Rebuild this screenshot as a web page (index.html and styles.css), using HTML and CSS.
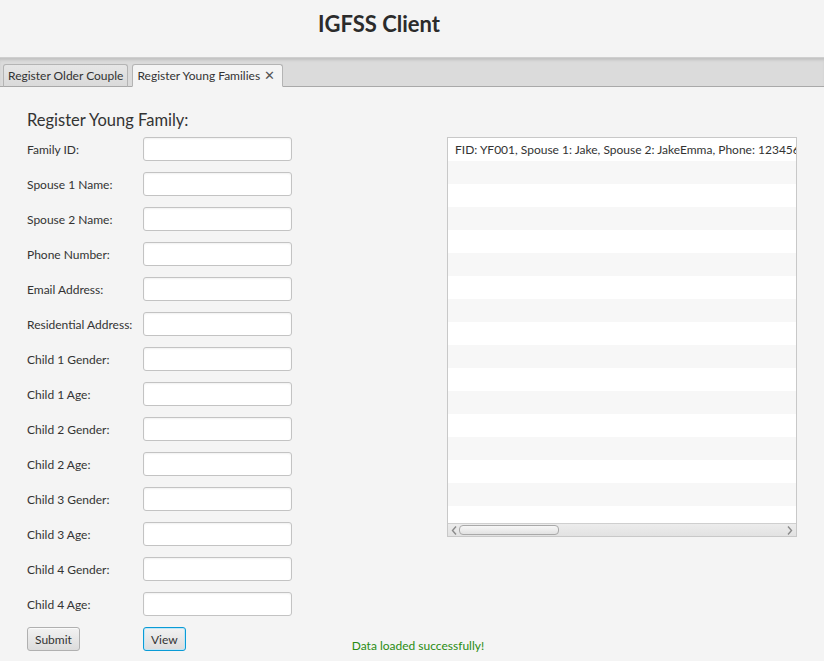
FILE: index.html
```html
<!DOCTYPE html>
<html>
<head>
<meta charset="utf-8">
<link rel="stylesheet" href="styles.css">
</head>
<body>
<header class="app-header"><h1 class="app-title">IGFSS Client</h1></header>
<nav class="tab-bar">
  <div class="tab">Register Older Couple</div>
  <div class="tab tab-active">Register Young Families <span class="tab-close">✕</span></div>
</nav>
<main class="content">
  <h2 class="form-title">Register Young Family:</h2>
  <div class="main-row">
    <div class="form-grid">
      <label class="field-label">Family ID:</label><div class="text-field"></div>
      <label class="field-label">Spouse 1 Name:</label><div class="text-field"></div>
      <label class="field-label">Spouse 2 Name:</label><div class="text-field"></div>
      <label class="field-label">Phone Number:</label><div class="text-field"></div>
      <label class="field-label">Email Address:</label><div class="text-field"></div>
      <label class="field-label">Residential Address:</label><div class="text-field"></div>
      <label class="field-label">Child 1 Gender:</label><div class="text-field"></div>
      <label class="field-label">Child 1 Age:</label><div class="text-field"></div>
      <label class="field-label">Child 2 Gender:</label><div class="text-field"></div>
      <label class="field-label">Child 2 Age:</label><div class="text-field"></div>
      <label class="field-label">Child 3 Gender:</label><div class="text-field"></div>
      <label class="field-label">Child 3 Age:</label><div class="text-field"></div>
      <label class="field-label">Child 4 Gender:</label><div class="text-field"></div>
      <label class="field-label">Child 4 Age:</label><div class="text-field"></div>
    </div>
    <div class="list-view">
      <div class="list-rows">
        <div class="list-row">FID: YF001, Spouse 1: Jake, Spouse 2: JakeEmma, Phone: 1234567890, Email: jake@example.com</div>
        <div class="list-row"></div><div class="list-row"></div><div class="list-row"></div>
        <div class="list-row"></div><div class="list-row"></div><div class="list-row"></div>
        <div class="list-row"></div><div class="list-row"></div><div class="list-row"></div>
        <div class="list-row"></div><div class="list-row"></div><div class="list-row"></div>
        <div class="list-row"></div><div class="list-row"></div><div class="list-row"></div>
        <div class="list-row"></div>
      </div>
      <div class="h-scroll">
        <svg class="arrow" width="7" height="9" viewBox="0 0 7 9"><path d="M5 0.5 L1.5 4.5 L5 8.5" fill="none" stroke="#8a8a8a" stroke-width="1.4"/></svg>
        <div class="thumb"></div>
        <div class="spacer"></div>
        <svg class="arrow" width="7" height="9" viewBox="0 0 7 9"><path d="M2 0.5 L5.5 4.5 L2 8.5" fill="none" stroke="#8a8a8a" stroke-width="1.4"/></svg>
      </div>
    </div>
  </div>
  <div class="button-row">
    <div class="btn-cell"><button class="btn">Submit</button></div>
    <button class="btn btn-focused">View</button>
    <span class="status">Data loaded successfully!</span>
  </div>
</main>
</body>
</html>
```
FILE: styles.css
```css
* { box-sizing: border-box; }
html, body { margin: 0; padding: 0; }
body {
  width: 824px;
  height: 661px;
  overflow: hidden;
  background: #f4f4f4;
  font-family: "Lato", "Open Sans", sans-serif;
  font-size: 12px;
  color: #333;
}
.app-header {
  height: 57px;
  display: flex;
  align-items: center;
  padding-left: 318px;
}
.app-title {
  margin: 0;
  font-size: 22px;
  font-weight: 700;
  color: #2b2b2b;
  padding-bottom: 10px;
}
.tab-bar {
  height: 30px;
  background: #dbdbdb;
  border-top: 1px solid #cfcfcf;
  box-shadow: inset 0 3px 3px -1px rgba(0,0,0,0.12);
  border-bottom: 1px solid #a9a9a9;
  display: flex;
  align-items: flex-end;
  padding-left: 3px;
  gap: 4px;
}
.tab {
  height: 23px;
  margin-bottom: -1px;
  padding: 0 4px;
  display: flex;
  align-items: center;
  border: 1px solid #b4b4b4;
  border-bottom: 1px solid #a9a9a9;
  border-radius: 3px 3px 0 0;
  background: linear-gradient(#e6e6e6, #dadada);
  color: #333;
  font-size: 12px;
}
.tab-active {
  background: #f4f4f4;
  border-bottom-color: #f4f4f4;
  padding-right: 7px;
}
.tab-close {
  margin-left: 4px;
  font-size: 13px;
  font-family: "DejaVu Sans", sans-serif;
  font-weight: 300;
  color: #555;
}
.content {
  padding: 23px 0 0 27px;
}
.form-title {
  margin: 0 0 7px 0;
  font-size: 16.5px;
  font-weight: 400;
  color: #333;
  line-height: 20px;
}
.main-row {
  display: flex;
  align-items: flex-start;
}
.form-grid {
  display: grid;
  grid-template-columns: 116px 149px;
  grid-auto-rows: 24px;
  row-gap: 11px;
  align-items: center;
}
.field-label {
  font-size: 12px;
  color: #333;
}
.text-field {
  height: 24px;
  background: #fff;
  border: 1px solid #c3c3c3;
  border-radius: 3px;
  box-shadow: inset 0 1px 2px rgba(0,0,0,0.06);
}
.list-view {
  margin-left: 155px;
  width: 350px;
  height: 400px;
  border: 1px solid #c8c8c8;
  background: #fff;
  display: flex;
  flex-direction: column;
  overflow: hidden;
}
.list-rows {
  flex: 1;
  overflow: hidden;
}
.list-row {
  height: 23px;
  padding-left: 7px;
  line-height: 23px;
  white-space: nowrap;
  overflow: hidden;
  font-size: 12px;
  color: #333;
}
.list-row:nth-child(even) { background: #f7f7f7; }
.list-row:nth-child(odd) { background: #ffffff; }
.h-scroll {
  height: 13px;
  flex: none;
  border-top: 1px solid #cfcfcf;
  background: linear-gradient(#ececec, #e2e2e2);
  display: flex;
  align-items: center;
  padding: 0 3px;
}
.arrow { flex: none; }
.thumb {
  margin-left: 1px;
  width: 100px;
  height: 10px;
  border: 1px solid #a9a9a9;
  border-radius: 4px;
  background: linear-gradient(#f7f7f7, #e2e2e2);
}
.spacer { flex: 1; }
.button-row {
  display: flex;
  align-items: flex-start;
  margin-top: 11px;
}
.btn-cell { width: 116px; }
.btn {
  height: 24px;
  padding: 0 7px;
  font-family: inherit;
  font-size: 12px;
  color: #333;
  border: 1px solid #b0b0b0;
  border-radius: 3px;
  background: linear-gradient(#f2f2f2, #dcdcdc);
  box-shadow: inset 0 1px 0 #fafafa;
}
.btn-focused {
  border: 1px solid #0a9bd6;
  box-shadow: inset 0 0 0 1px #bfe6f6;
}
.status {
  margin-left: 166px;
  margin-top: 11px;
  font-size: 12px;
  color: #2a8c12;
}
```
